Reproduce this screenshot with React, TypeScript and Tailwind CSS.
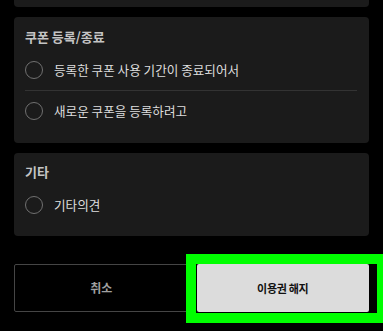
import React from "react";

const font = { fontFamily: '"Noto Sans CJK KR", "Noto Sans", sans-serif' };

function Radio({ label }: { label: string }) {
  return (
    <div className="flex h-[40px] items-center gap-[11px]">
      <span className="block h-[18px] w-[18px] shrink-0 rounded-full border-[1.5px] border-[#707070]" />
      <span className="text-[12.6px] leading-[16px] text-[#dedede]">{label}</span>
    </div>
  );
}

function Card({ title, options, compact }: { title: string; options: string[]; compact?: boolean }) {
  return (
    <div
      className={
        compact
          ? "rounded-[4px] bg-[#1b1b1b] pb-[11px] pl-[11px] pr-[12px] pt-[11px]"
          : "rounded-[4px] bg-[#1b1b1b] pb-[12px] pl-[11px] pr-[12px] pt-[12px]"
      }
    >
      <div className="text-[13px] font-semibold leading-[16px] text-[#c4c4c4]">{title}</div>
      <div className="mt-[5px] flex flex-col">
        {options.map((o, i) => (
          <React.Fragment key={o}>
            {i > 0 && <div className="h-px bg-[#333333]" />}
            <Radio label={o} />
          </React.Fragment>
        ))}
      </div>
    </div>
  );
}

export default function App() {
  return (
    <div className="relative h-[331px] w-[383px] overflow-hidden bg-black px-[14px]" style={font}>
      <div className="h-[7px] rounded-b-[4px] bg-[#1b1b1b]" />
      <div className="mt-[10px] flex flex-col gap-[10px]">
        <Card title="쿠폰 등록/종료" options={["등록한 쿠폰 사용 기간이 종료되어서", "새로운 쿠폰을 등록하려고"]} />
        <Card title="기타" options={["기타의견"]} compact />
      </div>
      <div className="mt-[28px] flex gap-[8px]">
        <button className="flex h-[48px] flex-1 items-center justify-center rounded-[2px] border border-[#454545] bg-black text-[12px] font-semibold text-[#a0a0a0]">
          취소
        </button>
        <button className="flex h-[48px] flex-1 items-center justify-center rounded-[2px] bg-[#dcdcdc] text-[11px] font-bold tracking-[-0.3px] text-[#111111]">
          이용권 해지
        </button>
      </div>
      <div className="pointer-events-none absolute left-[186px] top-[254px] h-[69px] w-[201px] border-[10px] border-[#00ff00]" />
    </div>
  );
}
